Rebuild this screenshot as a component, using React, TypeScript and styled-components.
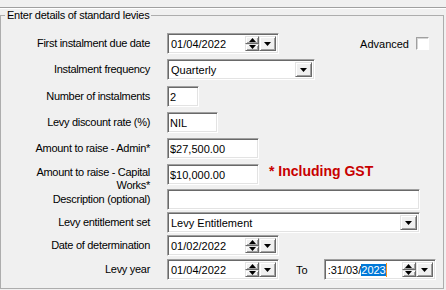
import styled, { createGlobalStyle, css } from 'styled-components';

const GlobalStyle = createGlobalStyle`
  html, body {
    margin: 0;
    padding: 0;
    background: #f0f0f0;
  }
  body {
    font-family: 'Liberation Sans', Arial, sans-serif;
    font-size: 11px;
    color: #000;
  }
`;

const sunken = css`
  box-sizing: border-box;
  border: 1px solid;
  border-color: #a0a0a0 #fff #fff #a0a0a0;
  box-shadow: inset 1px 1px #696969, inset -1px -1px #e3e3e3;
  background: #fff;
`;

const raised = css`
  box-sizing: border-box;
  background: #f0f0f0;
  border: 1px solid;
  border-color: #e3e3e3 #696969 #696969 #e3e3e3;
  box-shadow: inset 1px 1px #fff, inset -1px -1px #a0a0a0;
`;

const Window = styled.div`
  width: 446px;
  height: 290px;
  box-sizing: border-box;
  padding-top: 7px;
  overflow: hidden;
  background: #f0f0f0;
`;

const Divider = styled.div`
  height: 1px;
  background: #a0a0a0;
  border-bottom: 1px solid #fff;
`;

const Group = styled.fieldset`
  box-sizing: border-box;
  width: 444px;
  height: 280px;
  margin: 0;
  padding: 11px 0 0 0;
  border: 1px solid #adadad;
  min-width: 0;
`;

const Legend = styled.legend`
  margin-left: 4px;
  padding: 0 2px;
  line-height: 13px;
  letter-spacing: -0.25px;
`;

const Form = styled.div`
  display: grid;
  grid-template-columns: 150px 1fr;
  grid-template-rows: 26px 27px 26px 26px 26px 25px 23px 23px 24px 21px;
  column-gap: 16px;
  align-items: start;
`;

const Label = styled.div<{ $multiline?: boolean }>`
  height: 21px;
  display: flex;
  flex-direction: column;
  justify-content: ${(p) => (p.$multiline ? 'flex-start' : 'center')};
  align-items: flex-end;
  padding-top: ${(p) => (p.$multiline ? '2px' : '0')};
  padding-right: 1px;
  box-sizing: border-box;
  text-align: right;
  line-height: 13px;
  white-space: nowrap;
  letter-spacing: -0.3px;
`;

const Field = styled.div`
  display: flex;
  align-items: center;
  height: 21px;
`;

const TextBox = styled.input<{ $width: number }>`
  ${sunken};
  width: ${(p) => p.$width}px;
  height: 21px;
  margin: 0;
  padding: 0 0 0 2px;
  font: inherit;
  color: #000;
  outline: none;
`;

const DateBox = styled.div`
  ${sunken};
  display: flex;
  width: 112px;
  height: 21px;
  padding: 2px;
`;

const DateText = styled.div`
  flex: 1;
  display: flex;
  align-items: center;
  padding-left: 1px;
  white-space: nowrap;
`;

const Selected = styled.span`
  background: #0078d7;
  color: #fff;
`;

const Caret = styled.span`
  display: inline-block;
  width: 1px;
  height: 14px;
  background: #f7931e;
`;

const Spin = styled.div`
  display: flex;
  flex-direction: column;
  width: 14px;
`;

const SpinButton = styled.div`
  ${raised};
  flex: 1;
  display: flex;
  align-items: center;
  justify-content: center;
`;

const DropButton = styled.div`
  ${raised};
  width: 17px;
  display: flex;
  align-items: center;
  justify-content: center;
`;

const Combo = styled.div<{ $width: number }>`
  ${sunken};
  display: flex;
  width: ${(p) => p.$width}px;
  height: 21px;
  padding: 2px;
`;

const ComboText = styled.div`
  flex: 1;
  display: flex;
  align-items: center;
  padding-left: 1px;
`;

const Advanced = styled.label`
  margin-left: auto;
  margin-right: 14px;
  display: flex;
  align-items: center;
  gap: 7px;
`;

const CheckBox = styled.span`
  box-sizing: border-box;
  width: 13px;
  height: 13px;
  border: 1px solid;
  border-color: #a0a0a0 #fff #fff #a0a0a0;
  box-shadow: inset 1px 1px #d5d5d5;
  background: #fff;
`;

const Note = styled.span`
  margin-left: 10px;
  align-self: flex-start;
  margin-top: -1px;
  color: #c80000;
  font-weight: bold;
  font-size: 14px;
  line-height: 16px;
`;

const ToLabel = styled.span`
  margin: 0 16px 0 17px;
`;

const Arrow = ({ up }: { up?: boolean }) => (
  <svg width="7" height="4" viewBox="0 0 7 4">
    <polygon points={up ? '0,4 7,4 3.5,0' : '0,0 7,0 3.5,4'} fill="#000" />
  </svg>
);

const DatePicker = ({ children }: { children: React.ReactNode }) => (
  <DateBox>
    <DateText>{children}</DateText>
    <Spin>
      <SpinButton>
        <Arrow up />
      </SpinButton>
      <SpinButton>
        <Arrow />
      </SpinButton>
    </Spin>
    <DropButton>
      <Arrow />
    </DropButton>
  </DateBox>
);

const DropDown = ({ width, value }: { width: number; value: string }) => (
  <Combo $width={width}>
    <ComboText>{value}</ComboText>
    <DropButton>
      <Arrow />
    </DropButton>
  </Combo>
);

export default function App() {
  return (
    <>
      <GlobalStyle />
      <Window>
        <Divider />
        <Group>
          <Legend>Enter details of standard levies</Legend>
          <Form>
            <Label>First instalment due date</Label>
            <Field>
              <DatePicker>01/04/2022</DatePicker>
              <Advanced>
                Advanced
                <CheckBox />
              </Advanced>
            </Field>

            <Label>Instalment frequency</Label>
            <Field>
              <DropDown width={148} value="Quarterly" />
            </Field>

            <Label>Number of instalments</Label>
            <Field>
              <TextBox $width={32} defaultValue="2" readOnly />
            </Field>

            <Label>Levy discount rate (%)</Label>
            <Field>
              <TextBox $width={51} defaultValue="NIL" readOnly />
            </Field>

            <Label>Amount to raise - Admin*</Label>
            <Field>
              <TextBox $width={92} defaultValue="$27,500.00" readOnly />
            </Field>

            <Label $multiline>
              <span>Amount to raise - Capital</span>
              <span>Works*</span>
            </Label>
            <Field>
              <TextBox $width={92} defaultValue="$10,000.00" readOnly />
              <Note>* Including GST</Note>
            </Field>

            <Label>Description (optional)</Label>
            <Field>
              <TextBox $width={253} defaultValue="" readOnly />
            </Field>

            <Label>Levy entitlement set</Label>
            <Field>
              <DropDown width={253} value="Levy Entitlement" />
            </Field>

            <Label>Date of determination</Label>
            <Field>
              <DatePicker>01/02/2022</DatePicker>
            </Field>

            <Label>Levy year</Label>
            <Field>
              <DatePicker>01/04/2022</DatePicker>
              <ToLabel>To</ToLabel>
              <DatePicker>
                :31/03/<Selected>2023</Selected>
                <Caret />
              </DatePicker>
            </Field>
          </Form>
        </Group>
      </Window>
    </>
  );
}
